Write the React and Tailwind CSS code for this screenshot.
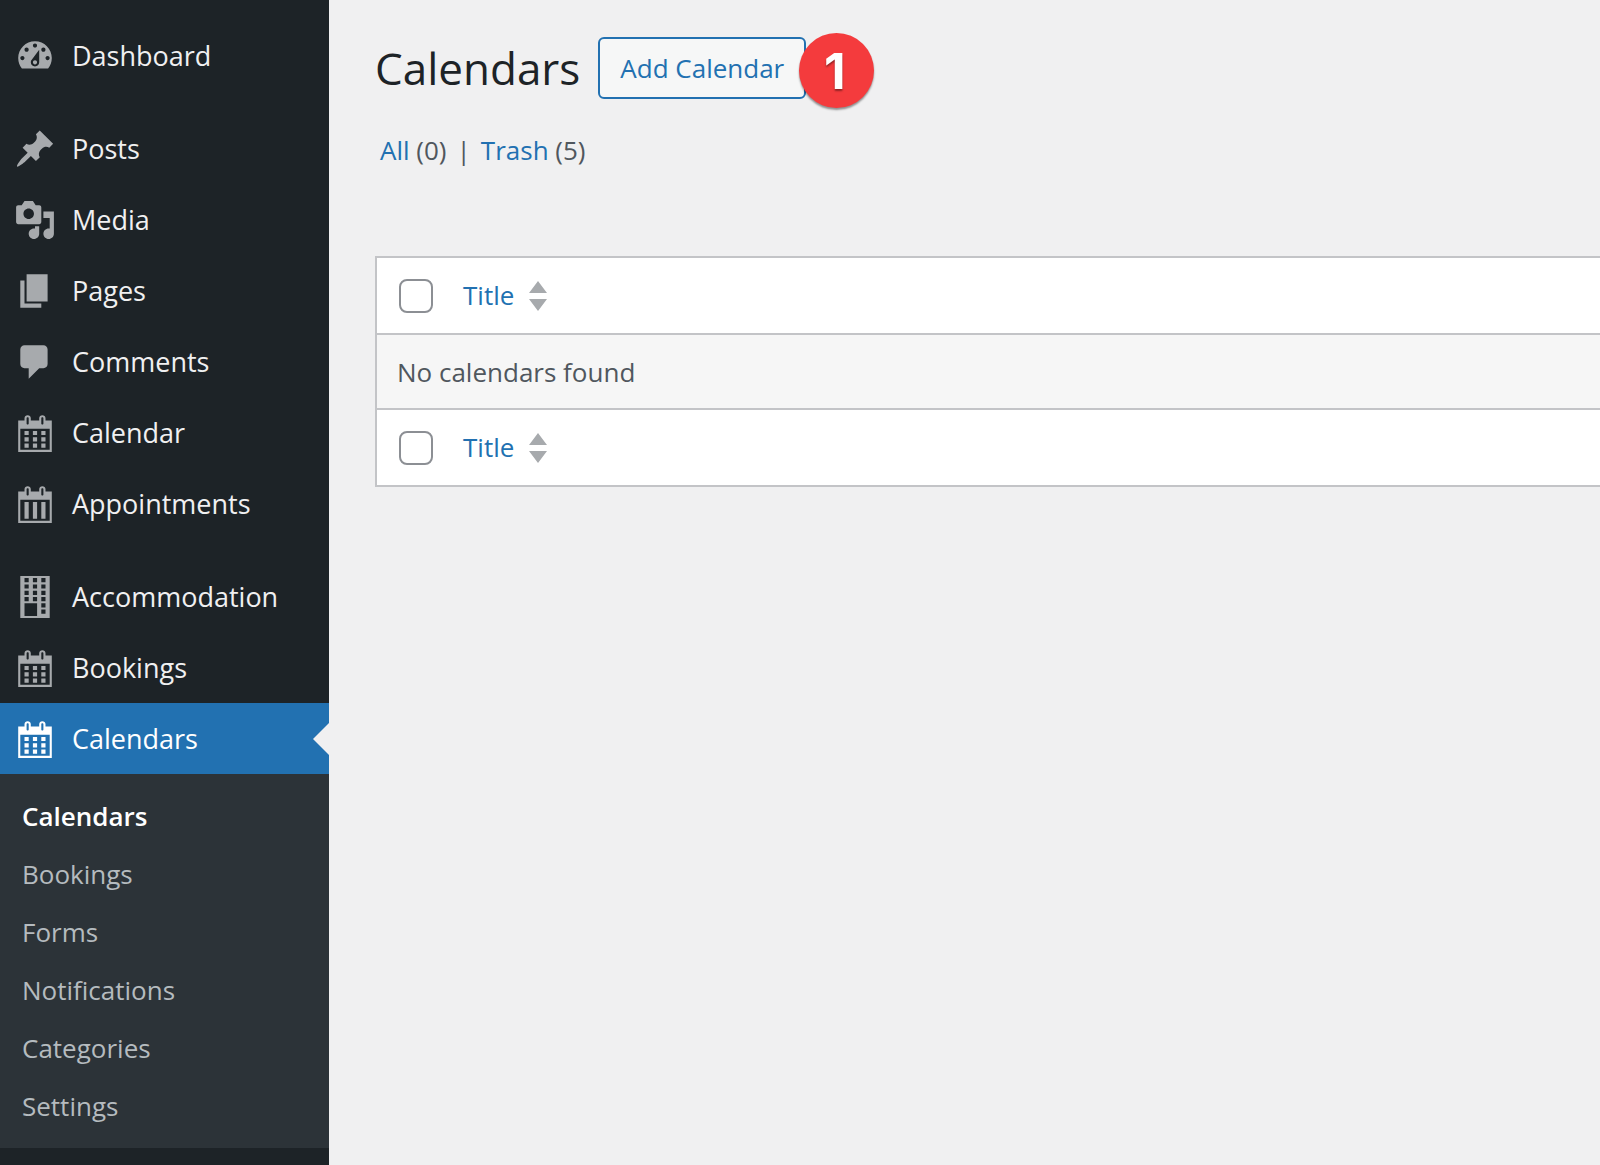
import { useState } from 'react'

const CALENDAR_FRAME = 'M15 4h3v15H2V4h3V3c0-.41.15-.76.44-1.06.29-.29.65-.44 1.06-.44s.77.15 1.06.44c.29.3.44.65.44 1.06v1h4V3c0-.41.15-.76.44-1.06.29-.29.65-.44 1.06-.44s.77.15 1.06.44c.29.3.44.65.44 1.06v1zM6 3v2.5c0 .14.05.26.15.36.09.09.21.14.35.14s.26-.05.35-.14c.1-.1.15-.22.15-.36V3c0-.14-.05-.26-.15-.35-.09-.1-.21-.15-.35-.15s-.26.05-.35.15c-.1.09-.15.21-.15.35zm7 0v2.5c0 .14.05.26.14.36.1.09.22.14.36.14s.26-.05.36-.14c.09-.1.14-.22.14-.36V3c0-.14-.05-.26-.14-.35-.1-.1-.22-.15-.36-.15s-.26.05-.36.15c-.09.09-.14.21-.14.35zm4 15V8H3v10h14z'

const icons = {
  dashboard: 'M3.76 16h12.48c1.1-1.37 1.76-3.11 1.76-5 0-4.42-3.58-8-8-8s-8 3.58-8 8c0 1.89.66 3.63 1.76 5zM10 4c.55 0 1 .45 1 1s-.45 1-1 1-1-.45-1-1 .45-1 1-1zM6 6c.55 0 1 .45 1 1s-.45 1-1 1-1-.45-1-1 .45-1 1-1zm8 0c.55 0 1 .45 1 1s-.45 1-1 1-1-.45-1-1 .45-1 1-1zm-5.37 5.55L12 7v6c0 1.1-.9 2-2 2s-2-.9-2-2c0-.57.24-1.08.63-1.45zM4 10c.55 0 1 .45 1 1s-.45 1-1 1-1-.45-1-1 .45-1 1-1zm12 0c.55 0 1 .45 1 1s-.45 1-1 1-1-.45-1-1 .45-1 1-1zm-5 3c0-.55-.45-1-1-1s-1 .45-1 1 .45 1 1 1 1-.45 1-1z',
  pin: 'M10.44 3.02l1.82-1.82 6.36 6.35-1.83 1.82c-1.05-.68-2.48-.57-3.41.36l-.75.75c-.92.93-1.04 2.35-.35 3.41l-1.83 1.82-2.41-2.41-2.8 2.79c-.42.42-3.38 2.71-3.8 2.29s1.86-3.39 2.28-3.81l2.79-2.79L4.1 9.36l1.83-1.82c1.05.69 2.48.57 3.4-.36l.75-.75c.93-.92 1.05-2.35.36-3.41z',
  media: 'M13 11V4c0-.55-.45-1-1-1h-1.67L9 1H5L3.67 3H2c-.55 0-1 .45-1 1v7c0 .55.45 1 1 1h10c.55 0 1-.45 1-1zM7 4.500c1.38 0 2.5 1.12 2.5 2.5S8.38 9.5 7 9.5 4.5 8.38 4.5 7 5.62 4.5 7 4.5zM14 6h5v10.5c0 1.38-1.12 2.5-2.5 2.5S14 17.88 14 16.5s1.12-2.5 2.5-2.5c.17 0 .34.02.5.05V9h-3V6zm-4 8.05V13h2v3.5c0 1.38-1.12 2.5-2.5 2.5S7 17.88 7 16.5 8.12 14 9.5 14c.17 0 .34.02.5.05z',
  page: 'M6 15V2h10v13H6zm-1 1h8v2H3V5h2v11z',
  comment: 'M5 2h9c1.1 0 2 .9 2 2v7c0 1.1-.9 2-2 2h-2l-5 5v-5H5c-1.1 0-2-.9-2-2V4c0-1.1.9-2 2-2z',
  calendar: `${CALENDAR_FRAME}M5 9h2v2H5zM9 9h2v2H9zM13 9h2v2h-2zM5 12h2v2H5zM9 12h2v2H9zM13 12h2v2h-2zM5 15h2v2H5zM9 15h2v2H9zM13 15h2v2h-2z`,
  appointments: `${CALENDAR_FRAME}M5 9h2v8H5zM9 9h2v8H9zM13 9h2v8h-2z`,
  building: 'M3 0h14v20H3zM5 1h2v2H5zM9 1h2v2H9zM13 1h2v2h-2zM5 4h2v2H5zM9 4h2v2H9zM13 4h2v2h-2zM5 7h2v2H5zM9 7h2v2H9zM13 7h2v2h-2zM5 10h2v2H5zM9 10h2v2H9zM13 10h2v2h-2zM5 13h6v6H5zM13 13h2v2h-2zM13 16h2v2h-2z',
}

const menuGroups = [
  [{ label: 'Dashboard', icon: 'dashboard' }],
  [
    { label: 'Posts', icon: 'pin' },
    { label: 'Media', icon: 'media' },
    { label: 'Pages', icon: 'page' },
    { label: 'Comments', icon: 'comment' },
    { label: 'Calendar', icon: 'calendar' },
    { label: 'Appointments', icon: 'appointments' },
  ],
  [
    { label: 'Accommodation', icon: 'building' },
    { label: 'Bookings', icon: 'calendar' },
    { label: 'Calendars', icon: 'calendar', active: true },
  ],
]

const subMenu = ['Calendars', 'Bookings', 'Forms', 'Notifications', 'Categories', 'Settings']

const MenuItem = ({ label, icon, active }) => (
  <li>
    <a
      href="#"
      aria-current={active ? 'page' : undefined}
      className={`relative flex h-[71px] items-center gap-4 pl-3.5 text-[27px] ${active ? 'bg-[#2271b1] text-white' : 'text-[#f0f0f1]'}`}
    >
      <svg viewBox="0 0 20 20" fillRule="evenodd" className={`size-[42px] shrink-0 ${active ? 'fill-white' : 'fill-[#a7aaad]'}`} aria-hidden="true">
        <path d={icons[icon]} />
      </svg>
      <span className="pt-0.5">{label}</span>
      {active && (
        <svg viewBox="0 0 16 32" className="absolute right-0 top-5 h-8 w-4 fill-[#f0f0f1]" aria-hidden="true">
          <path d="M16 0v32L0 16z" />
        </svg>
      )}
    </a>
  </li>
)

const Sidebar = () => (
  <nav className="w-[329px] shrink-0 bg-[#1d2327] pt-5">
    <div className="flex flex-col gap-[22px]">
      {menuGroups.map(group => (
        <ul key={group[0].label}>
          {group.map(item => <MenuItem key={item.label} {...item} />)}
        </ul>
      ))}
    </div>
    <ul className="bg-[#2c3338] py-[13px]">
      {subMenu.map((label, index) => (
        <li key={label}>
          <a href="#" className={`flex h-[58px] items-center pl-[22px] text-[26px] ${index === 0 ? 'font-semibold text-white' : 'text-[#b5bbbf]'}`}>
            {label}
          </a>
        </li>
      ))}
    </ul>
  </nav>
)

const HeadingCells = ({ id, checked, onToggle }) => (
  <tr className="h-[76px] bg-white">
    <td className="w-[86px] pl-[22px]">
      <input
        type="checkbox"
        id={id}
        aria-label="Select all"
        checked={checked}
        onChange={onToggle}
        className="block size-[34px] appearance-none rounded-lg border-2 border-[#8c8f94] bg-white checked:bg-[#2271b1]"
      />
    </td>
    <th scope="col" className="text-left font-normal">
      <a href="#" className="inline-flex items-center gap-[15px] text-[#2271b1]">
        Title
        <svg viewBox="0 0 18 30" className="h-[30px] w-[18px] fill-[#a7aaad]" aria-hidden="true">
          <path d="M9 0l9 12H0zM0 18h18L9 30z" />
        </svg>
      </a>
    </th>
  </tr>
)

const App = () => {
  const [allSelected, setAllSelected] = useState(false)
  const toggleAll = () => setAllSelected(prev => !prev)

  return (
    <div className="flex min-h-screen bg-[#f0f0f1] font-['Open_Sans','Noto_Sans',sans-serif]">
      <Sidebar />
      <main className="min-w-0 grow pl-[46px] pt-[37px] text-[26px] text-[#50575e]">
        <header className="flex items-center gap-[18px]">
          <h1 className="text-[44px] leading-none text-[#1d2327]">Calendars</h1>
          <div className="relative">
            <button type="button" className="h-[62px] rounded-md border-2 border-[#2271b1] bg-[#f6f7f7] px-5 text-[#2271b1]">
              Add Calendar
            </button>
            <span className="absolute -right-[68px] -top-1 flex size-[75px] items-center justify-center rounded-full bg-[#f43b3d] pr-1 font-['Inter',sans-serif] text-[50px] leading-none font-bold text-white shadow-[0_2px_2px_rgba(0,0,0,0.4)] text-shadow-[0_2px_2px_rgba(0,0,0,0.4)]">
              1
            </span>
          </div>
        </header>

        <ul className="mt-[31px] flex h-10 items-center gap-2.5 pl-[5px]">
          <li><a href="#" className="text-[#2271b1]">All</a> (0)</li>
          <li aria-hidden="true">|</li>
          <li><a href="#" className="text-[#2271b1]">Trash</a> (5)</li>
        </ul>

        <div className="mt-[86px] border-2 border-r-0 border-[#c3c4c7]">
          <table className="w-full border-collapse">
            <thead>
              <HeadingCells id="select-all-top" checked={allSelected} onToggle={toggleAll} />
            </thead>
            <tbody>
              <tr className="h-[75px] border-y-2 border-[#c3c4c7] bg-[#f6f6f6]">
                <td colSpan={2} className="pl-5 pt-0.5">No calendars found</td>
              </tr>
            </tbody>
            <tfoot>
              <HeadingCells id="select-all-bottom" checked={allSelected} onToggle={toggleAll} />
            </tfoot>
          </table>
        </div>
      </main>
    </div>
  )
}

export default App
